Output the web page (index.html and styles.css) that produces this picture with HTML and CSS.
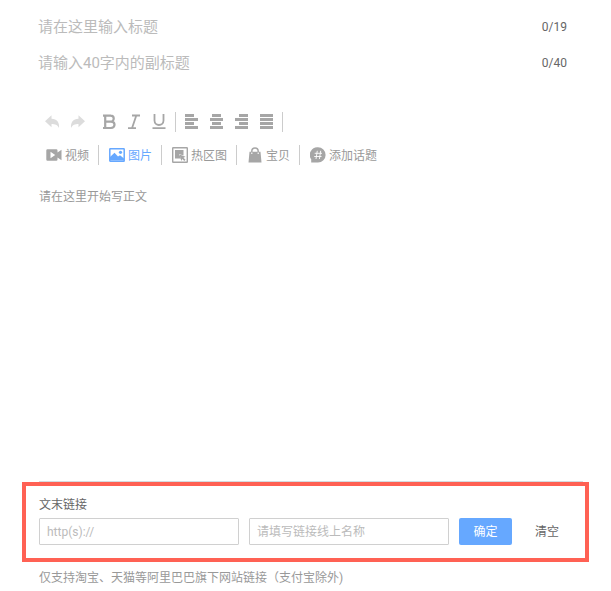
FILE: index.html
```html
<!DOCTYPE html>
<html lang="zh-CN">
<head>
    <meta charset="UTF-8">
    <meta name="viewport" content="width=device-width, initial-scale=1.0">
    <title>发布文章</title>
    <link rel="stylesheet" href="styles.css">
</head>
<body>
    <main class="editor">
        <div class="title-row">
            <input type="text" class="title-input" placeholder="请在这里输入标题" aria-label="标题" maxlength="19">
            <span class="count">0/19</span>
        </div>
        <div class="title-row">
            <input type="text" class="title-input" placeholder="请输入40字内的副标题" aria-label="副标题" maxlength="40">
            <span class="count">0/40</span>
        </div>

        <div class="toolbar format-bar">
            <button type="button" class="tool disabled" aria-label="撤销">
                <svg width="16" height="16" viewBox="0 0 16 16"><path d="M6.500 1.200 0 7.300l6.500 6V10c3.500 0 6 .7 7.500 4C14.500 8.500 12 4.700 6.500 4.700z" fill="currentColor"/></svg>
            </button>
            <button type="button" class="tool disabled" aria-label="重做">
                <svg width="16" height="16" viewBox="0 0 16 16"><path d="M8.500 1.200 15 7.300l-6.500 6V10C5 10 2.500 10.700 1 14 .5 8.500 3 4.700 8.500 4.700z" fill="currentColor"/></svg>
            </button>
            <button type="button" class="tool bold" aria-label="加粗">
                <svg width="16" height="16" viewBox="0 0 16 16"><path d="M1 1.600h8M1 14h8.500M3.200 1.600V14M3.200 7.600H9M8.500 1.600c4.300 0 4.300 6 0 6M9 7.600c4.700 0 4.700 6.400 0 6.400" fill="none" stroke="currentColor" stroke-width="2.200"/></svg>
            </button>
            <button type="button" class="tool" aria-label="斜体">
                <svg width="16" height="16" viewBox="0 0 16 16"><path d="M5 1.500h8M1 14.200h8M9.300 1.500 5 14.200" fill="none" stroke="currentColor" stroke-width="1.800"/></svg>
            </button>
            <button type="button" class="tool" aria-label="下划线">
                <svg width="16" height="16" viewBox="0 0 16 16"><path d="M2.500 0v6.500c0 6 9 6 9 0V0M.5 14.200h13" fill="none" stroke="currentColor" stroke-width="1.800"/></svg>
            </button>
            <span class="divider"></span>
            <button type="button" class="tool" aria-label="左对齐">
                <svg width="16" height="16" viewBox="0 0 16 16"><path d="M1 1.500h9M1 5.500h13M1 9.500h9M1 13.500h13" stroke="currentColor" stroke-width="3"/></svg>
            </button>
            <button type="button" class="tool" aria-label="居中">
                <svg width="16" height="16" viewBox="0 0 16 16"><path d="M3 1.500h9M1 5.500h13M3 9.500h9M1 13.500h13" stroke="currentColor" stroke-width="3"/></svg>
            </button>
            <button type="button" class="tool" aria-label="右对齐">
                <svg width="16" height="16" viewBox="0 0 16 16"><path d="M5 1.500h9M1 5.500h13M5 9.500h9M1 13.500h13" stroke="currentColor" stroke-width="3"/></svg>
            </button>
            <button type="button" class="tool" aria-label="两端对齐">
                <svg width="16" height="16" viewBox="0 0 16 16"><path d="M1 1.500h13M1 5.500h13M1 9.500h13M1 13.500h13" stroke="currentColor" stroke-width="3"/></svg>
            </button>
            <span class="divider"></span>
        </div>

        <div class="toolbar insert-bar">
            <button type="button" class="insert">
                <svg width="16" height="16" viewBox="0 0 16 16"><path fill-rule="evenodd" d="M1.500 2.200h8.800q1.200 0 1.200 1.200v2l4-2.700v10.600l-4-2.700v2q0 1.200-1.200 1.200H1.500Q.3 13.800.3 12.600V3.400q0-1.200 1.200-1.200zM4.500 4.800v6.400L9.200 8z" fill="currentColor"/></svg>
                <span>视频</span>
            </button>
            <span class="divider"></span>
            <button type="button" class="insert active">
                <svg width="16" height="16" viewBox="0 0 16 16"><rect x=".8" y="1.800" width="14.400" height="12.400" rx=".5" fill="none" stroke="currentColor" stroke-width="1.500"/><path d="M1 13.500V10l4.500-4.200L9 9.500l2-1.300 4 3.300v2z" fill="currentColor"/><circle cx="11.500" cy="5.300" r="1.600" fill="currentColor"/></svg>
                <span>图片</span>
            </button>
            <span class="divider"></span>
            <button type="button" class="insert">
                <svg width="16" height="16" viewBox="0 0 16 16"><rect x=".7" y=".7" width="14.600" height="14.600" rx=".5" fill="none" stroke="currentColor" stroke-width="1.400"/><path d="M3 3h8.500v5.500L7 7l2 4.500H3z" fill="currentColor"/><path d="m7.500 7.500 6 2.300-2 1 2 2-1.200 1.200-2-2-1 2z" fill="currentColor"/></svg>
                <span>热区图</span>
            </button>
            <span class="divider"></span>
            <button type="button" class="insert">
                <svg width="16" height="16" viewBox="0 0 16 16"><path d="M2.500 4.700h11L14.500 15.500h-13z" fill="currentColor"/><path d="M4.800 6V4.200c0-4.400 6.400-4.400 6.400 0V6" fill="none" stroke="currentColor" stroke-width="1.500"/><path d="M4.800 5.500v1.600M11.200 5.500v1.600" stroke="#fff" stroke-width="1.100"/></svg>
                <span>宝贝</span>
            </button>
            <span class="divider"></span>
            <button type="button" class="insert">
                <svg width="16" height="16" viewBox="0 0 16 16"><path d="M8 .3a7.600 7.600 0 1 1 0 15.200H1.200V12.300A7.600 7.600 0 0 1 8 .3z" fill="currentColor"/><path d="M7.300 3.800 6 12M10.700 3.800 9.400 12M4.700 6.300h7.300M4.200 9.500h7.300" stroke="#fff" stroke-width=".9"/></svg>
                <span>添加话题</span>
            </button>
        </div>

        <div class="content">
            <textarea placeholder="请在这里开始写正文" aria-label="正文"></textarea>
        </div>

        <form class="link-box">
            <label class="link-label" for="link-url">文末链接</label>
            <div class="link-row">
                <input type="text" id="link-url" class="link-input" placeholder="http(s)://">
                <input type="text" class="link-input" placeholder="请填写链接线上名称" aria-label="链接名称">
                <button type="button" class="confirm">确定</button>
                <button type="reset" class="clear">清空</button>
            </div>
        </form>
        <p class="tip">仅支持淘宝、天猫等阿里巴巴旗下网站链接（支付宝除外)</p>
    </main>
</body>
</html>
```
FILE: styles.css
```css
* {
    box-sizing: border-box;
}
body {
    margin: 0;
    background-color: #fff;
    color: #666;
    font-family: Roboto, "Noto Sans CJK SC", sans-serif;
    font-size: 12px;
    line-height: 20px;
}
button,
input,
textarea {
    margin: 0;
    padding: 0;
    border: none;
    outline: none;
    background: none;
    color: inherit;
    font: inherit;
}
button {
    cursor: pointer;
}
.editor {
    padding: 9px 22px 0;
}
.title-row {
    display: flex;
    align-items: center;
    height: 36px;
    padding: 0 22px 0 16px;
}
.title-input {
    flex: 1;
    min-width: 0;
    font-size: 15px;
}
::placeholder {
    color: #bbb;
    opacity: 1;
}

/* toolbar */
.toolbar {
    display: flex;
    align-items: center;
    height: 20px;
    color: #a6a6a6;
}
.format-bar {
    margin-top: 31px;
    padding-left: 18px;
}
.insert-bar {
    margin-top: 13px;
    padding-left: 24px;
}
.tool {
    display: flex;
    justify-content: center;
    width: 25px;
}
.disabled {
    color: #dcdcdc;
}
.bold {
    margin-left: 7px;
}
.divider {
    width: 1px;
    height: 20px;
    background-color: #ccc;
}
.format-bar .divider {
    margin: 0 3px;
}
.insert-bar .divider {
    margin: 0 10px 0 9px;
}
.insert {
    display: flex;
    align-items: center;
    gap: 3px;
    color: #999;
}
.insert span {
    padding-top: 1px;
}
.insert svg {
    color: #a6a6a6;
}
.active,
.active svg {
    color: #66a8ff;
}

.content {
    margin: 22px 6px 0 17px;
    border-bottom: 1px solid #d5dce0;
}
.content textarea {
    display: block;
    width: 100%;
    height: 294px;
    resize: none;
}
.content textarea::placeholder {
    color: #999;
}

/* link at the end of the article */
.link-box {
    padding: 9px 13px 13px;
    border: 4px solid #ff6154;
}
.link-label {
    display: block;
    margin-bottom: 3px;
}
.link-row {
    display: flex;
    align-items: center;
}
.link-input {
    flex: 0 1 200px;
    min-width: 0;
    height: 27px;
    margin-right: 10px;
    padding: 0 7px;
    border: 1px solid #d0d0d0;
    border-radius: 1px;
}
.confirm {
    width: 53px;
    height: 27px;
    border-radius: 2px;
    background-color: #66a8ff;
    color: #fff;
}
.clear {
    margin-left: 23px;
}
.tip {
    margin: 6px 0 0;
    padding: 0 17px;
    color: #999;
}
```
